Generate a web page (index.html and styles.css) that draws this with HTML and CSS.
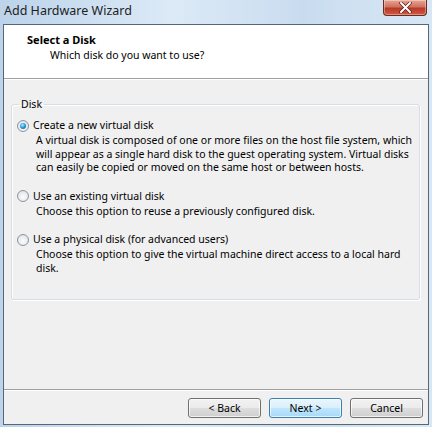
FILE: index.html
```html
<!DOCTYPE html>
<html lang="en">
<head>
  <meta charset="UTF-8"/>
  <title>Add Hardware Wizard</title>
  <link rel="stylesheet" href="styles.css">
</head>
<body>
  <div class="frame">
    <div class="titlebar">
      <span class="title">Add Hardware Wizard</span>
      <button class="close" aria-label="Close">
        <svg width="13" height="11" viewBox="0 0 13 11">
          <path d="M2 1 L11 10 M11 1 L2 10" stroke="#5a1a14" stroke-width="3.4" stroke-linecap="round"/>
          <path d="M2 1 L11 10 M11 1 L2 10" stroke="#fff" stroke-width="2" stroke-linecap="round"/>
        </svg>
      </button>
    </div>

    <div class="window">
      <div class="header">
        <h1>Select a Disk</h1>
        <p>Which disk do you want to use?</p>
      </div>

      <div class="body">
        <fieldset class="group">
          <legend>Disk</legend>

          <div class="option">
            <div class="choice"><span class="radio checked"></span>Create a new virtual disk</div>
            <p class="desc">A virtual disk is composed of one or more files on the host file system, which will appear as a single hard disk to the guest operating system. Virtual disks can easily be copied or moved on the same host or between hosts.</p>
          </div>

          <div class="option">
            <div class="choice"><span class="radio"></span>Use an existing virtual disk</div>
            <p class="desc">Choose this option to reuse a previously configured disk.</p>
          </div>

          <div class="option">
            <div class="choice"><span class="radio"></span>Use a physical disk (for advanced users)</div>
            <p class="desc">Choose this option to give the virtual machine direct access to a local hard disk.</p>
          </div>
        </fieldset>
      </div>

      <div class="footer">
        <button class="btn">&lt; Back</button>
        <button class="btn default">Next &gt;</button>
        <button class="btn">Cancel</button>
      </div>
    </div>
  </div>
</body>
</html>
```

FILE: styles.css
```css
:root {
  --face: #f0f0f0;
  --text: #000;
  --frame: #cfe1f3;
}
* { box-sizing: border-box; margin: 0; padding: 0 }
html, body { width: 432px; height: 427px; overflow: hidden }
body {
  font-family: "Noto Sans", "Open Sans", sans-serif;
  font-size: 10.5px;
  color: var(--text);
  background: var(--frame);
}
.frame {
  height: 427px;
  background: linear-gradient(to right, #bcd3ea 0%, #dceaf7 40%, #c9dcef 70%, #d8e7f6 100%);
  display: flex;
  flex-direction: column;
}
.titlebar {
  height: 24px;
  display: flex;
  align-items: flex-start;
  padding-left: 4px;
}
.title {
  font-size: 12.5px;
  line-height: 21px;
  color: #1e1e1e;
}
.close {
  margin-left: auto;
  margin-right: 5px;
  width: 44px;
  height: 16px;
  border: 1px solid #6b2a22;
  border-top: none;
  border-radius: 0 0 4px 4px;
  background: linear-gradient(to bottom, #e7a595 0%, #d0725e 45%, #b8392a 55%, #cf5a3f 100%);
  display: flex;
  align-items: center;
  justify-content: center;
  box-shadow: inset 0 0 0 1px rgba(255,255,255,0.35);
}
.window {
  margin: 0 3px 2px 3px;
  height: 401px;
  border: 1px solid #56677a;
  background: var(--face);
  display: flex;
  flex-direction: column;
}
.header {
  height: 54px;
  background: #fff;
  border-bottom: 1px solid #a0a0a0;
  box-shadow: 0 1px 0 #fff;
  padding: 7px 0 0 23px;
}
.header h1 {
  font-size: 11px;
  font-weight: bold;
  line-height: 15px;
}
.header p {
  padding-left: 23px;
  line-height: 17px;
}
.body {
  flex: 1;
  padding: 18px 8px 0 7px;
}
.group {
  border: 1px solid #d5dfe5;
  border-radius: 3px;
  box-shadow: inset 1px 1px 0 #fff, 1px 1px 0 #fff;
  padding: 7px 6px 12px 5px;
  min-width: 0;
  height: 203px;
}
.group legend {
  margin-left: 2px;
  padding: 0 2px;
  line-height: 14px;
}
.option + .option { margin-top: 14px }
.choice {
  display: flex;
  align-items: center;
  gap: 4px;
  line-height: 15px;
}
.radio {
  width: 12px;
  height: 12px;
  border-radius: 50%;
  border: 1px solid #8e959d;
  background: radial-gradient(circle at 50% 60%, #fdfdfd 0%, #e3e6ea 70%, #c8cdd3 100%);
  display: flex;
  align-items: center;
  justify-content: center;
}
.radio.checked::after {
  content: "";
  width: 6px;
  height: 6px;
  border-radius: 50%;
  background: radial-gradient(circle at 40% 35%, #b9e9ff 0%, #2aa2de 45%, #0c4f86 100%);
}
.desc {
  padding-left: 19px;
  margin-top: 1px;
  line-height: 13.5px;
}
.footer {
  height: 35px;
  border-top: 1px solid #a0a0a0;
  box-shadow: inset 0 1px 0 #fff;
  display: flex;
  justify-content: flex-end;
  align-items: flex-start;
  gap: 8px;
  padding: 8px 5px 0 0;
}
.btn {
  width: 73px;
  height: 20px;
  font: inherit;
  border: 1px solid #707070;
  border-radius: 3px;
  background: linear-gradient(to bottom, #f2f2f2 0%, #ebebeb 48%, #dddddd 52%, #cfcfcf 100%);
  box-shadow: inset 0 0 0 1px rgba(255,255,255,0.7);
}
.btn.default {
  border-color: #3c7fb1;
  background: linear-gradient(to bottom, #eaf6fd 0%, #d9f0fc 48%, #bee6fd 52%, #a7d9f5 100%);
}
```
